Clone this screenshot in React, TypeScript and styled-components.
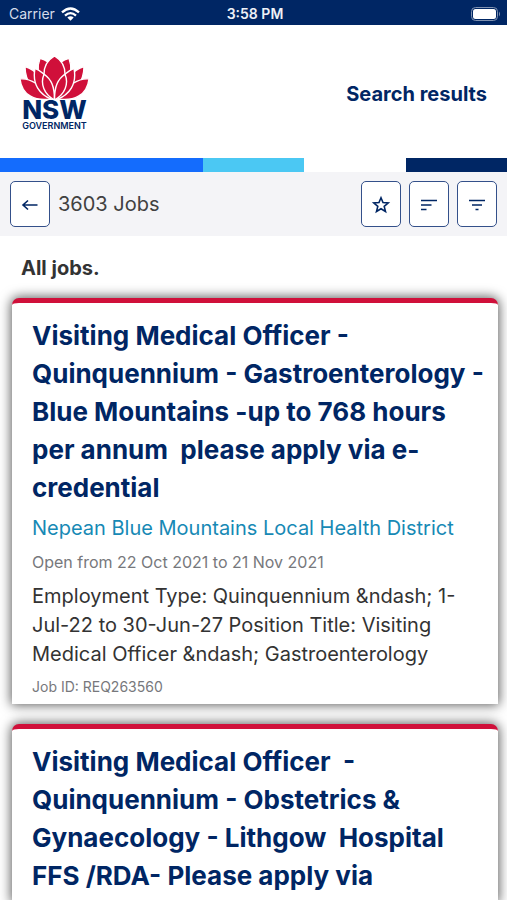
import React from "react";
import styled, { createGlobalStyle } from "styled-components";

const navy = "#002664";
const red = "#d0103a";

const GlobalStyle = createGlobalStyle`
  *, *::before, *::after { box-sizing: border-box; }
  body {
    margin: 0;
    background: #fff;
    font-family: "Inter", "Liberation Sans", sans-serif;
    color: #333;
  }
`;

const Screen = styled.div`
  display: flex;
  flex-direction: column;
  height: 100vh;
  overflow: hidden;
`;

const StatusBar = styled.div`
  display: grid;
  grid-template-columns: 1fr auto 1fr;
  align-items: center;
  height: 25px;
  padding: 2px 6px 0 9px;
  background: ${navy};
  color: #fff;
  font-size: 14px;
  line-height: 20px;
`;

const Carrier = styled.span`
  display: flex;
  align-items: center;
  gap: 6px;
  color: #d5dcea;
`;

const Clock = styled.span`
  font-size: 14px;
  font-weight: 600;
  color: #eef1f7;
`;

const BatteryIcon = styled.svg`
  justify-self: end;
`;

const Header = styled.header`
  display: flex;
  align-items: center;
  justify-content: space-between;
  flex: none;
  height: 133px;
  padding: 0 20px;
`;

const Brand = styled.div`
  display: flex;
  flex-direction: column;
  align-items: center;
  width: 69px;
  padding-top: 3px;
  color: ${navy};
`;

const BrandName = styled.span`
  font-size: 26px;
  font-weight: 800;
  line-height: 20px;
`;

const BrandSub = styled.span`
  padding-top: 1px;
  font-size: 9px;
  font-weight: 600;
  line-height: 10px;
`;

const PageTitle = styled.h1`
  margin: 0;
  padding-top: 4px;
  font-size: 20px;
  line-height: 28px;
  font-weight: 700;
  color: ${navy};
`;

const Stripe = styled.div`
  display: grid;
  flex: none;
  grid-template-columns: 2fr 1fr 1fr 1fr;
  height: 14px;
`;

const StripePart = styled.span<{ $color: string }>`
  background: ${(p) => p.$color};
`;

const Toolbar = styled.nav`
  display: flex;
  align-items: center;
  flex: none;
  gap: 8px;
  height: 64px;
  padding: 0 10px;
  background: #f4f4f7;
`;

const JobCount = styled.span`
  flex: 1;
  font-size: 20px;
  line-height: 28px;
  color: #414141;
`;

const IconButton = styled.button`
  display: flex;
  align-items: center;
  justify-content: center;
  width: 40px;
  height: 46px;
  padding: 2px 0 0;
  border: 1px solid #34508a;
  border-radius: 5px;
  background: #fff;
  color: ${navy};
`;

const Results = styled.main`
  flex: 1;
  min-height: 0;
  overflow: hidden;
`;

const Heading = styled.h2`
  margin: 0;
  padding: 18px 21px 16px;
  font-size: 20px;
  line-height: 28px;
  font-weight: 700;
`;

const List = styled.div`
  display: flex;
  flex-direction: column;
  gap: 20px;
  padding: 0 9px 20px 12px;
`;

const Card = styled.article`
  padding: 14px 12px 7px 20px;
  border-top: 5px solid ${red};
  border-radius: 7px 7px 0 0;
  background: #fff;
  box-shadow: 0 0 12px 1px rgba(0, 0, 0, 0.65);
`;

const JobTitle = styled.h3`
  margin: 0;
  font-size: 26px;
  line-height: 38px;
  font-weight: 700;
  color: ${navy};
  white-space: pre-wrap;
`;

const Employer = styled.p`
  margin: 6px 0 0;
  font-size: 20px;
  line-height: 30px;
  color: #1789b5;
`;

const Dates = styled.p`
  margin: 7px 0 0;
  font-size: 16px;
  line-height: 24px;
  color: #77787c;
`;

const Description = styled.p`
  margin: 8px 0 0;
  font-size: 20px;
  line-height: 29px;
  white-space: pre-wrap;
`;

const JobId = styled.p`
  margin: 8px 0 0;
  font-size: 14px;
  line-height: 20px;
  color: #77787c;
`;

const Waratah = () => (
  <svg width="69" height="44" viewBox="0 0 69 46" preserveAspectRatio="none" aria-hidden="true">
    <g fill={red} stroke="#fff" strokeWidth="1.4" strokeLinejoin="round">
      <path d="M20 2.5C26 4 31 8 34 14V35L23 29C17 20 17 11 20 2.5Z" />
      <path d="M49 2.5C43 4 38 8 35 14V35L46 29C52 20 52 11 49 2.5Z" />
      <path d="M5 11C15 14 26 25 29 44C15 40 5 28 5 11Z" />
      <path d="M64 11C54 14 43 25 40 44C54 40 64 28 64 11Z" />
      <path d="M0 24C10 23 22 30 30 45C16 47 2 42 0 24Z" />
      <path d="M69 24C59 23 47 30 39 45C53 47 67 42 69 24Z" />
      <path d="M34.5 0C28 4 24 11 24 19C30 25 33 31 34.5 40C36 31 39 25 45 19C45 11 41 4 34.5 0Z" />
      <path d="M15 13C26 18 33 28 33.5 46C19 41 12 29 15 13Z" />
      <path d="M54 13C43 18 36 28 35.5 46C50 41 57 29 54 13Z" />
      <path d="M24 19C31 24 34.5 31 34.5 46C24 40 20 29 24 19Z" />
      <path d="M45 19C38 24 34.5 31 34.5 46C45 40 49 29 45 19Z" />
    </g>
  </svg>
);

const WifiIcon = () => (
  <svg width="19" height="14" viewBox="0 0 19 14" aria-hidden="true">
    <g fill="none" stroke="#fff" strokeWidth="2.3">
      <path d="M1 5.4Q9.5 -2.4 18 5.4" />
      <path d="M4 8.6Q9.5 3.6 15 8.6" />
    </g>
    <path d="M6.3 10.6Q9.5 7.8 12.7 10.6L9.5 13.8Z" fill="#fff" />
  </svg>
);

const icons: Record<string, React.ReactNode> = {
  back: <path d="M17.5 10H3M8 5.5L3 10L8 14.5" />,
  star: (
    <path d="M10 2.8L12 7.6L17.2 8L13.2 11.4L14.5 16.5L10 13.7L5.5 16.5L6.8 11.4L2.8 8L8 7.6Z" />
  ),
  sort: <path d="M2 5.5H18M2 10H12.5M2 14.5H7.5" />,
  filter: <path d="M2 5.5H18M5 10H15M8.5 14.5H11.5" />,
};

const Glyph = ({ name }: { name: string }) => (
  <svg
    width="20"
    height="20"
    viewBox="0 0 20 20"
    fill="none"
    stroke="currentColor"
    strokeWidth="1.6"
    aria-hidden="true"
  >
    {icons[name]}
  </svg>
);

const jobs = [
  {
    title:
      "Visiting Medical Officer - Quinquennium - Gastroenterology - Blue Mountains -up to 768 hours per annum  please apply via e-credential",
    employer: "Nepean Blue Mountains Local Health District",
    dates: "Open from 22 Oct 2021 to 21 Nov 2021",
    description:
      "Employment Type: Quinquennium &ndash; 1-Jul-22 to 30-Jun-27 Position Title: Visiting Medical Officer &ndash; Gastroenterology",
    id: "Job ID: REQ263560",
  },
  {
    title:
      "Visiting Medical Officer  - Quinquennium - Obstetrics & Gynaecology - Lithgow  Hospital FFS /RDA- Please apply via",
  },
];

export default function App() {
  return (
    <Screen>
      <GlobalStyle />
      <StatusBar>
        <Carrier>
          Carrier
          <WifiIcon />
        </Carrier>
        <Clock>3:58 PM</Clock>
        <BatteryIcon width="30" height="14" viewBox="0 0 30 14" aria-hidden="true">
          <rect x="0.5" y="0.5" width="26" height="13" rx="4" fill="none" stroke="#8092b1" />
          <rect x="2" y="2" width="23" height="10" rx="2.5" fill="#fff" />
          <path d="M28 4.5Q30 7 28 9.5Z" fill="#8092b1" />
        </BatteryIcon>
      </StatusBar>
      <Header>
        <Brand>
          <Waratah />
          <BrandName>NSW</BrandName>
          <BrandSub>GOVERNMENT</BrandSub>
        </Brand>
        <PageTitle>Search results</PageTitle>
      </Header>
      <Stripe>
        <StripePart $color="#146cfd" />
        <StripePart $color="#4bc8f3" />
        <StripePart $color="#ffffff" />
        <StripePart $color={navy} />
      </Stripe>
      <Toolbar>
        <IconButton aria-label="Back">
          <Glyph name="back" />
        </IconButton>
        <JobCount>3603 Jobs</JobCount>
        <IconButton aria-label="Saved jobs">
          <Glyph name="star" />
        </IconButton>
        <IconButton aria-label="Sort">
          <Glyph name="sort" />
        </IconButton>
        <IconButton aria-label="Filter">
          <Glyph name="filter" />
        </IconButton>
      </Toolbar>
      <Results>
        <Heading>All jobs.</Heading>
        <List>
          {jobs.map((job) => (
            <Card key={job.title}>
              <JobTitle>{job.title}</JobTitle>
              {job.employer && <Employer>{job.employer}</Employer>}
              {job.dates && <Dates>{job.dates}</Dates>}
              {job.description && <Description>{job.description}</Description>}
              {job.id && <JobId>{job.id}</JobId>}
            </Card>
          ))}
        </List>
      </Results>
    </Screen>
  );
}
